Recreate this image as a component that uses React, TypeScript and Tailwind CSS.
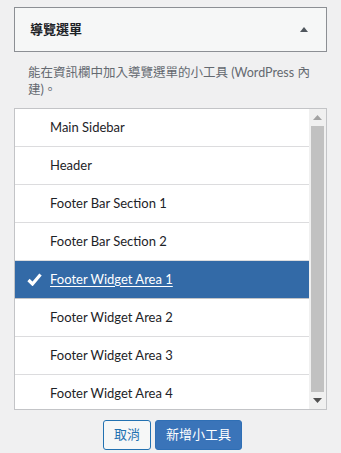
import React from "react";

const areas = [
  "Main Sidebar",
  "Header",
  "Footer Bar Section 1",
  "Footer Bar Section 2",
  "Footer Widget Area 1",
  "Footer Widget Area 2",
  "Footer Widget Area 3",
  "Footer Widget Area 4",
];

const selected = "Footer Widget Area 1";

export default function App() {
  return (
    <div
      className="h-[453px] w-[341px] bg-[#f0f0f1] px-[14px] pt-[7px] text-[13px] text-[#1d2327]"
      style={{ fontFamily: 'Lato, "Noto Sans CJK TC", sans-serif' }}
    >
      {/* Heading */}
      <div className="flex h-[45px] items-center justify-between border border-[#8c8f94] bg-[#f6f7f7] pl-[15px] pr-[18px]">
        <span className="font-semibold">導覽選單</span>
        <svg width="8" height="5" viewBox="0 0 8 5">
          <path d="M4 0 L8 5 L0 5 Z" fill="#50575e" />
        </svg>
      </div>

      {/* Description */}
      <p className="mt-[12px] px-[14px] text-[12.5px] leading-[17px] text-[#646970]">
        能在資訊欄中加入導覽選單的小工具 (WordPress 內建)。
      </p>

      {/* List */}
      <div className="mt-[10px] flex h-[302px] border border-[#c3c4c7] bg-white">
        <div className="flex-1 overflow-hidden">
          {areas.map((item) => {
            const on = item === selected;
            return (
              <div
                key={item}
                className={
                  on
                    ? "flex h-[38px] shrink-0 items-center border-b border-[#c3c4c7] bg-[#336aa7] text-white"
                    : "flex h-[38px] shrink-0 items-center border-b border-[#dcdcde]"
                }
              >
                <div className="flex w-[35px] justify-end pr-[8px]">
                  {on && (
                    <svg width="15" height="13" viewBox="0 0 15 13">
                      <path
                        d="M1.5 7 L5.5 11 L13.5 1.5"
                        fill="none"
                        stroke="white"
                        strokeWidth="3.2"
                      />
                    </svg>
                  )}
                </div>
                <span className={on ? "underline underline-offset-2" : ""}>
                  {item}
                </span>
              </div>
            );
          })}
        </div>

        {/* Scrollbar */}
        <div className="flex w-[17px] flex-col items-center bg-[#f0f0f0]">
          <div className="flex h-[17px] items-center justify-center">
            <svg width="9" height="5" viewBox="0 0 9 5">
              <path d="M4.5 0 L9 5 L0 5 Z" fill="#a3a3a3" />
            </svg>
          </div>
          <div className="w-[13px] flex-1 bg-[#c1c1c1]" />
          <div className="flex h-[17px] items-center justify-center">
            <svg width="9" height="5" viewBox="0 0 9 5">
              <path d="M0 0 L9 0 L4.5 5 Z" fill="#505050" />
            </svg>
          </div>
        </div>
      </div>

      {/* Actions */}
      <div className="mt-[10px] flex justify-center gap-[4px] pl-[4px]">
        <button className="h-[30px] rounded-[3px] border border-[#2271b1] bg-[#f6f7f7] px-[10px] text-[#2271b1]">
          取消
        </button>
        <button className="h-[30px] rounded-[3px] border border-[#2f6fb5] bg-[#3a74b9] px-[10px] text-white">
          新增小工具
        </button>
      </div>
    </div>
  );
}
